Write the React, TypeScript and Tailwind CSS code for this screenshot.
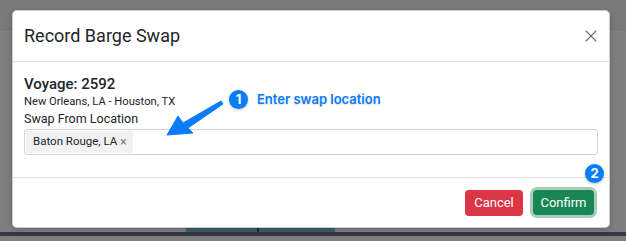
import { X } from 'lucide-react';

const font = { fontFamily: 'Roboto, "Noto Sans", sans-serif' };

function Badge({ n }: { n: number }) {
  return (
    <span className="flex h-[19px] w-[19px] items-center justify-center rounded-full bg-[#0b7cf7] font-['Inter'] text-[13px] font-bold leading-none text-white shadow-[0_1px_3px_rgba(0,0,0,0.25)]">
      {n}
    </span>
  );
}

function BackgroundPage() {
  return (
    <div className="flex h-full flex-col bg-[#7f7f7f]">
      <div className="h-[30px] border-b border-[#737373] bg-[#7a7a7a]" />
      <div className="flex-1" />
      <div className="flex h-[4px] pl-[186px]">
        <div className="w-[71px] bg-[#3e5f6c]" />
        <div className="w-[2px] bg-[#1d2b33]" />
        <div className="w-[76px] bg-[#3e5f6c]" />
      </div>
      <div className="h-[4px] bg-[#343a45]" />
      <div className="h-[5px] bg-[#7f7f7f]" />
    </div>
  );
}

export default function App() {
  return (
    <div className="relative h-[241px] w-[626px] overflow-hidden" style={font}>
      <BackgroundPage />

      {/* modal */}
      <div className="absolute left-[12px] top-[10px] flex w-[598px] flex-col rounded-[5px] border border-black/20 bg-white shadow-[0_2px_6px_rgba(0,0,0,0.2)]">
        <div className="flex h-[51px] items-center justify-between border-b border-[#dee2e6] pl-[11px] pr-[8px]">
          <h2 className="text-[18px] font-normal leading-6 text-[#212529]">Record Barge Swap</h2>
          <X className="h-[20px] w-[20px] text-[#6c6c6c]" strokeWidth={1.3} />
        </div>

        <div className="flex flex-col px-[11px] pb-[22px] pt-[12px] text-[#212529]">
          <div className="text-[15px] font-medium leading-5">Voyage: 2592</div>
          <div className="text-[11.2px] leading-4">New Orleans, LA - Houston, TX</div>
          <div className="text-[12.5px] leading-[18px]">Swap From Location</div>
          <div className="mt-px flex h-[26px] items-center rounded-[3px] border border-[#ced4da] p-px">
            <span className="flex h-full items-center gap-[3px] bg-[#f1f1f1] pl-[7px] pr-[6px] text-[11.5px] text-[#212529]">
              Baton Rouge, LA
              <span className="text-[12px] leading-none text-[#777]">×</span>
            </span>
          </div>
        </div>

        <div className="flex h-[50px] items-center justify-end gap-[10px] border-t border-[#dee2e6] pr-[15px]">
          <button className="h-[26px] w-[58px] rounded-[4px] bg-[#dc3545] text-[13px] text-white">Cancel</button>
          <button className="h-[25px] w-[61px] rounded-[4px] bg-[#198754] text-[13px] text-white shadow-[0_0_0_3px_rgba(25,135,84,0.4)]">
            Confirm
          </button>
        </div>
      </div>

      {/* annotations */}
      <div className="absolute left-[229px] top-[90px] flex items-center gap-[9px]">
        <Badge n={1} />
        <span className="font-['Inter'] text-[13px] font-semibold text-[#0b7cf7] [text-shadow:0_1px_2px_rgba(0,0,0,0.15)]">
          Enter swap location
        </span>
      </div>
      <svg className="absolute left-0 top-0" width="626" height="241" viewBox="0 0 626 241">
        <polygon
          points="167,135 178,116 183,123 221,101 223,104 188,128 193,133"
          fill="#0b7cf7"
          stroke="#0b7cf7"
          strokeWidth="1"
          strokeLinejoin="round"
        />
      </svg>
      <div className="absolute left-[585px] top-[164px]">
        <Badge n={2} />
      </div>
    </div>
  );
}
